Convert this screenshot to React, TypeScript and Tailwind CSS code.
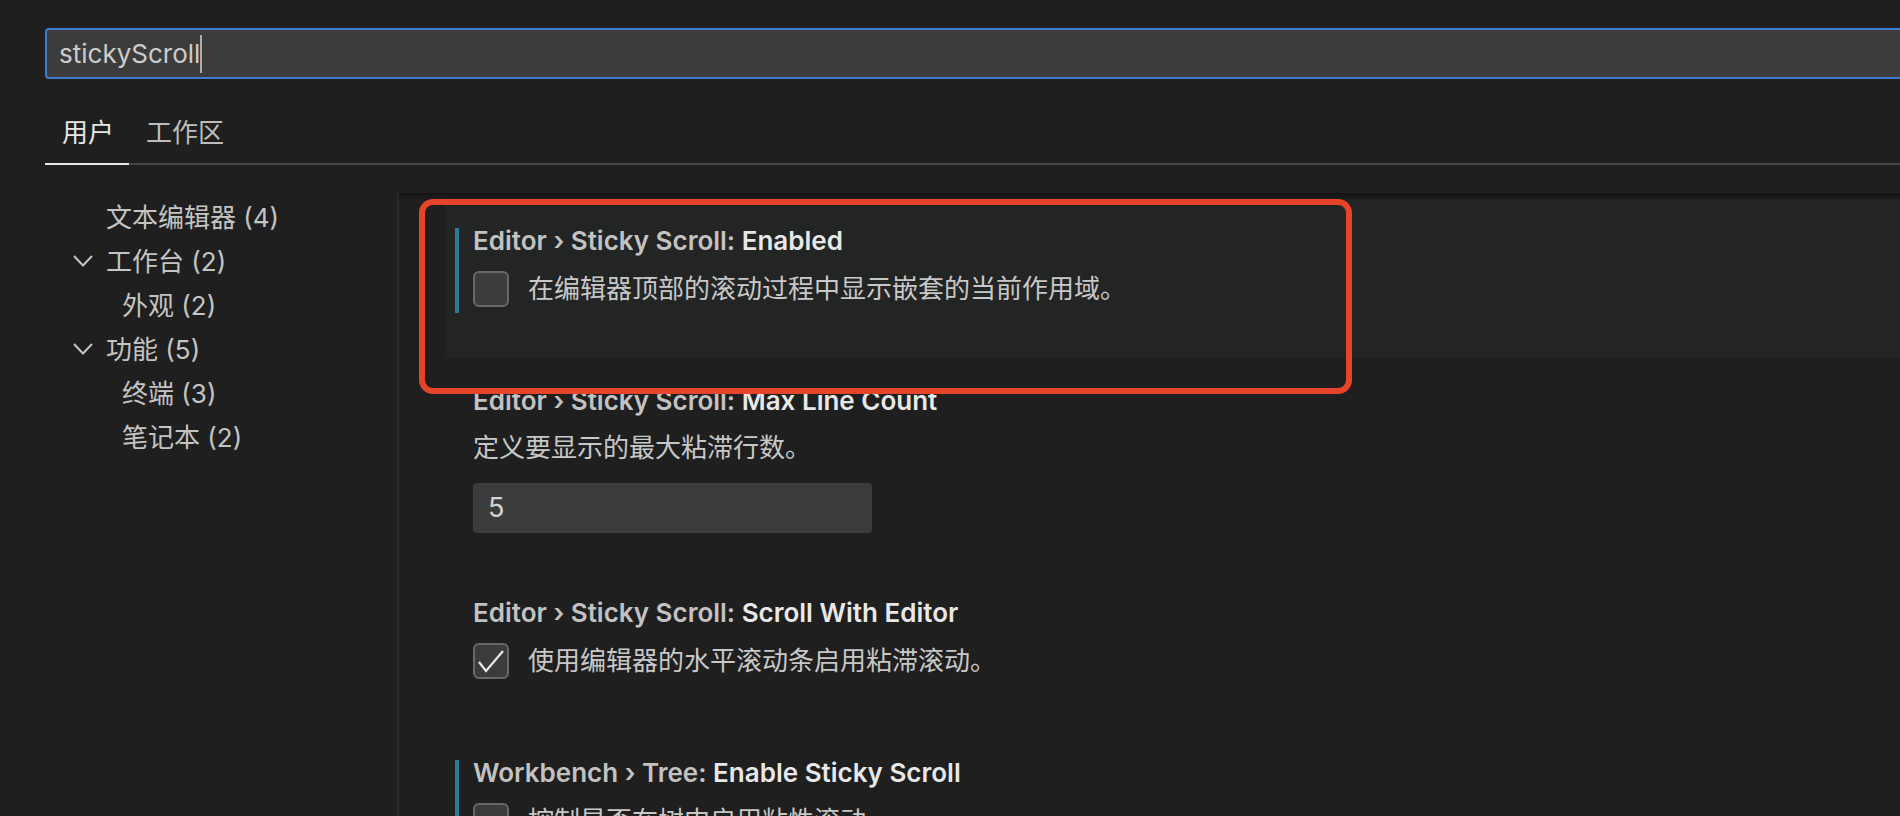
import React from 'react';

const font = "font-['Inter','Noto_Sans_CJK_SC',sans-serif]";

const Chevron = () => (
  <svg width="20" height="12" viewBox="0 0 20 12" fill="none" className="shrink-0">
    <polyline points="1,1 10,10.5 19,1" stroke="#c5c5c5" strokeWidth="2" strokeLinejoin="round" />
  </svg>
);

const Checkbox: React.FC<{ checked?: boolean }> = ({ checked }) => (
  <div className="w-[36px] h-[36px] shrink-0 rounded-[6px] border-2 border-[#686868] bg-[#3c3c3c] relative">
    {checked && (
      <svg width="36" height="36" viewBox="0 0 36 36" className="absolute -left-[2px] -top-[2px]">
        <polyline points="6,19 13,28 30,8" fill="none" stroke="#e8e8e8" strokeWidth="2.2" />
      </svg>
    )}
  </div>
);

const Title: React.FC<{ category: string; label: string }> = ({ category, label }) => (
  <div className="h-[26px] leading-[26px] text-[26px] font-semibold whitespace-nowrap">
    <span className="text-[#c2c2c2]">{category}</span>
    <span className="text-[#e8e8e8]">{label}</span>
  </div>
);

const tree = [
  { text: '文本编辑器', count: 4, level: 1, chevron: false },
  { text: '工作台', count: 2, level: 1, chevron: true },
  { text: '外观', count: 2, level: 2, chevron: false },
  { text: '功能', count: 5, level: 1, chevron: true },
  { text: '终端', count: 3, level: 2, chevron: false },
  { text: '笔记本', count: 2, level: 2, chevron: false },
];

const App: React.FC = () => {
  return (
    <div className={`w-[1900px] h-[816px] overflow-hidden bg-[#1f1f1f] relative ${font}`}>
      {/* search */}
      <div className="pt-[28px] pl-[45px]">
        <div className="w-[1900px] h-[51px] rounded-[4px] border-2 border-[#3b7ecb] bg-[#3c3c3c] flex items-center pl-[12px]">
          <span className="text-[26px] leading-[38px] text-[#cccccc]">stickyScroll</span>
          <span className="w-[2px] h-[38px] bg-[#aeafad]" />
        </div>
      </div>

      {/* tabs */}
      <div className="mt-[22px] ml-[45px] flex h-[64px]">
        <div className="w-[84px] pl-[17px] flex items-center border-b-2 border-[#e7e7e7] text-[26px] text-[#e7e7e7]">
          用户
        </div>
        <div className="pl-[17px] pr-[17px] flex items-center border-b-2 border-[#454545] text-[26px] text-[#bdbdbd]">
          工作区
        </div>
        <div className="flex-1 border-b-2 border-[#454545]" />
      </div>

      {/* body */}
      <div className="mt-[28px] flex h-[651px]">
        <div className="w-[399px] shrink-0 border-r-2 border-[#2c2c2c] pt-[2px]">
          {tree.map((item) => (
            <div key={item.text} className="h-[44px] flex items-center text-[26px] text-[#c4c4c4] whitespace-nowrap">
              {item.chevron ? (
                <div className="w-[106px] pl-[73px] flex items-center">
                  <Chevron />
                </div>
              ) : (
                <div className={item.level === 2 ? 'w-[122px]' : 'w-[106px]'} />
              )}
              <span>
                {item.text} ({item.count})
              </span>
            </div>
          ))}
        </div>

        <div className="flex-1 relative pt-[5px]">
          <div className="absolute top-0 left-0 right-0 h-[8px] bg-gradient-to-b from-[#131313] to-transparent" />

          {/* row 1 */}
          <div className="ml-[46px] pl-[10px] pt-[30px] pb-[45px] bg-[#232424]">
            <div className="border-l-4 border-[#2b7a98] pl-[14px]">
              <Title category="Editor › Sticky Scroll: " label="Enabled" />
              <div className="mt-[17px] h-[42px] flex items-start gap-[19px]">
                <Checkbox />
                <span className="text-[26px] leading-[36px] text-[#c8c8c8] whitespace-nowrap">
                  在编辑器顶部的滚动过程中显示嵌套的当前作用域。
                </span>
              </div>
            </div>
          </div>

          {/* row 2 */}
          <div className="ml-[46px] pl-[10px] pt-[30px] pb-[37px]">
            <div className="border-l-4 border-transparent pl-[14px]">
              <Title category="Editor › Sticky Scroll: " label="Max Line Count" />
              <div className="mt-[21px] text-[26px] leading-[26px] text-[#c8c8c8] whitespace-nowrap">
                定义要显示的最大粘滞行数。
              </div>
              <div className="mt-[22px] w-[399px] h-[50px] rounded-[4px] bg-[#3c3c3c] pl-[15px] flex items-center text-[27px] text-[#d4d4d4]">
                5
              </div>
            </div>
          </div>

          {/* row 3 */}
          <div className="ml-[46px] pl-[10px] pt-[30px] pb-[45px]">
            <div className="border-l-4 border-transparent pl-[14px]">
              <Title category="Editor › Sticky Scroll: " label="Scroll With Editor" />
              <div className="mt-[17px] h-[42px] flex items-start gap-[19px]">
                <Checkbox checked />
                <span className="text-[26px] leading-[36px] text-[#c8c8c8] whitespace-nowrap">
                  使用编辑器的水平滚动条启用粘滞滚动。
                </span>
              </div>
            </div>
          </div>

          {/* row 4 */}
          <div className="ml-[46px] pl-[10px] pt-[30px] pb-[45px]">
            <div className="border-l-4 border-[#2b7a98] pl-[14px]">
              <Title category="Workbench › Tree: " label="Enable Sticky Scroll" />
              <div className="mt-[17px] h-[42px] flex items-start gap-[19px]">
                <Checkbox />
                <span className="text-[26px] leading-[36px] text-[#c8c8c8] whitespace-nowrap">
                  控制是否在树中启用粘性滚动。
                </span>
              </div>
            </div>
          </div>
        </div>
      </div>

      {/* annotation */}
      <div className="absolute left-[419px] top-[199px] w-[933px] h-[195px] border-[6px] border-[#e6432b] rounded-[14px] pointer-events-none" />
    </div>
  );
};

export default App;
